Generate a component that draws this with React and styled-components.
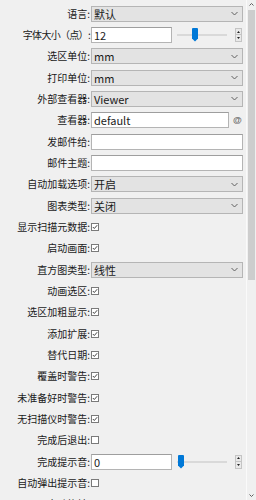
import React from 'react';
import styled, { createGlobalStyle } from 'styled-components';

const GlobalStyle = createGlobalStyle`
  html, body {
    margin: 0;
    padding: 0;
    background: #f0f0f0;
  }
  body {
    font-family: 'Noto Sans CJK SC', 'Noto Sans', sans-serif;
    font-size: 10px;
    color: #1a1a1a;
  }
`;

const Window = styled.div`
  width: 256px;
  height: 500px;
  display: flex;
  overflow: hidden;
  background: #f0f0f0;
`;

const Form = styled.div`
  flex: 1;
  display: grid;
  grid-template-columns: 91px 1fr;
  grid-auto-rows: 21.33px;
  padding: 3px 3px 0 0;
  align-items: center;
`;

const Label = styled.div`
  text-align: right;
  white-space: nowrap;
  line-height: 14px;
  font-size: 10px;
  letter-spacing: ${(p) => (p.$tight ? '-0.7px' : '0')};
  padding-right: 1px;
`;

const Field = styled.div`
  display: flex;
  align-items: center;
  height: 16px;
`;

const Select = styled.div`
  flex: 1;
  height: 16px;
  box-sizing: border-box;
  background: #e3e3e3;
  border: 1px solid #b5b5b5;
  display: flex;
  align-items: center;
  padding-left: 2px;
  font-size: 11px;
  svg {
    margin-left: auto;
    margin-right: 4px;
  }
`;

const Input = styled.div`
  width: ${(p) => p.$width || 'auto'};
  flex: ${(p) => (p.$width ? 'none' : 1)};
  height: 16px;
  box-sizing: border-box;
  background: #fff;
  border: 1px solid #b4b4b4;
  border-top-color: #9e9e9e;
  display: flex;
  align-items: center;
  padding-left: 2px;
  font-size: 11px;
`;

const Slider = styled.div`
  position: relative;
  width: 50px;
  height: 14px;
  margin-left: 5px;
  &::before {
    content: '';
    position: absolute;
    left: 0;
    right: 0;
    top: 6px;
    height: 2px;
    background: #d9d9d9;
  }
`;

const Thumb = styled.svg`
  position: absolute;
  top: 0;
`;

const Spin = styled.div`
  margin-left: auto;
  margin-right: 1px;
  width: 7px;
  height: 14px;
  display: flex;
  flex-direction: column;
  border: 1px solid #c4c4c4;
  box-sizing: border-box;
  background: #e9e9e9;
`;

const SpinHalf = styled.div`
  flex: 1;
  display: flex;
  align-items: center;
  justify-content: center;
  &:first-child {
    border-bottom: 1px solid #c4c4c4;
  }
`;

const AtButton = styled.div`
  width: 9px;
  height: 14px;
  margin-left: 4px;
  margin-right: 1px;
  display: flex;
  align-items: center;
  justify-content: center;
  font-family: 'Liberation Sans', sans-serif;
  font-size: 9px;
  font-weight: bold;
  color: #6a6a6a;
`;

const Scrollbar = styled.div`
  width: 9px;
  display: flex;
  flex-direction: column;
  align-items: center;
  background: #f0f0f0;
  border-left: 1px solid #fafafa;
`;

const Arrow = styled.div`
  height: 9px;
  display: flex;
  align-items: center;
  justify-content: center;
`;

const ScrollThumb = styled.div`
  width: 7px;
  height: 270px;
  margin-top: 1px;
  background: #cdcdcd;
`;

const ScrollSpace = styled.div`
  flex: 1;
`;

const Chevron = () => (
  <svg width="7" height="5" viewBox="0 0 7 5">
    <path d="M0.5 1 L3.5 4 L6.5 1" fill="none" stroke="#606060" strokeWidth="1" />
  </svg>
);

const Check = ({ on }) => (
  <svg width="8" height="8" viewBox="0 0 8 8">
    <rect x="0.5" y="0.5" width="7" height="7" fill="#fff" stroke="#7a7a7a" />
    {on && <path d="M1.8 4 L3.3 5.5 L6.2 2.2" fill="none" stroke="#444" strokeWidth="1" />}
  </svg>
);

const Tri = ({ up }) => (
  <svg width="3" height="2" viewBox="0 0 3 2">
    <path d={up ? 'M0 2 L1.5 0 L3 2Z' : 'M0 0 L1.5 2 L3 0Z'} fill="#222" />
  </svg>
);

const NumberField = ({ value, pos }) => (
  <Field>
    <Input $width="81px">{value}</Input>
    <Slider>
      <Thumb width="6" height="14" viewBox="0 0 6 14" style={{ left: pos }}>
        <path d="M0 1 Q0 0 1 0 L5 0 Q6 0 6 1 L6 10.5 L3 13.5 L0 10.5Z" fill="#0078d7" />
      </Thumb>
    </Slider>
    <Spin>
      <SpinHalf><Tri up /></SpinHalf>
      <SpinHalf><Tri /></SpinHalf>
    </Spin>
  </Field>
);

const rows = [
  { label: '语言:', type: 'select', value: '默认' },
  { label: '字体大小（点）:', type: 'number', value: '12', pos: 15, tight: true },
  { label: '选区单位:', type: 'select', value: 'mm' },
  { label: '打印单位:', type: 'select', value: 'mm' },
  { label: '外部查看器:', type: 'select', value: 'Viewer' },
  { label: '查看器:', type: 'viewer', value: 'default' },
  { label: '发邮件给:', type: 'input', value: '' },
  { label: '邮件主题:', type: 'input', value: '' },
  { label: '自动加载选项:', type: 'select', value: '开启' },
  { label: '图表类型:', type: 'select', value: '关闭' },
  { label: '显示扫描元数据:', type: 'check', on: true },
  { label: '启动画面:', type: 'check', on: true },
  { label: '直方图类型:', type: 'select', value: '线性' },
  { label: '动画选区:', type: 'check', on: true },
  { label: '选区加粗显示:', type: 'check', on: true },
  { label: '添加扩展:', type: 'check', on: true },
  { label: '替代日期:', type: 'check', on: true },
  { label: '覆盖时警告:', type: 'check', on: true },
  { label: '未准备好时警告:', type: 'check', on: true },
  { label: '无扫描仪时警告:', type: 'check', on: true },
  { label: '完成后退出:', type: 'check', on: false },
  { label: '完成提示音:', type: 'number', value: '0', pos: 1 },
  { label: '自动弹出提示音:', type: 'check', on: false },
  { label: '自动旋转:', type: 'check', on: false },
];

const renderField = (row) => {
  switch (row.type) {
    case 'select':
      return (
        <Field>
          <Select>
            {row.value}
            <Chevron />
          </Select>
        </Field>
      );
    case 'number':
      return <NumberField value={row.value} pos={row.pos} />;
    case 'viewer':
      return (
        <Field>
          <Input>{row.value}</Input>
          <AtButton>@</AtButton>
        </Field>
      );
    case 'input':
      return (
        <Field>
          <Input />
        </Field>
      );
    default:
      return (
        <Field>
          <Check on={row.on} />
        </Field>
      );
  }
};

const App = () => {
  return (
    <>
      <GlobalStyle />
      <Window>
        <Form>
          {rows.map((row) => (
            <React.Fragment key={row.label}>
              <Label $tight={row.tight}>{row.label}</Label>
              {renderField(row)}
            </React.Fragment>
          ))}
        </Form>
        <Scrollbar>
          <Arrow>
            <svg width="5" height="3" viewBox="0 0 5 3">
              <path d="M0.5 2.5 L2.5 0.5 L4.5 2.5" fill="none" stroke="#606060" />
            </svg>
          </Arrow>
          <ScrollThumb />
          <ScrollSpace />
          <Arrow>
            <svg width="5" height="3" viewBox="0 0 5 3">
              <path d="M0.5 0.5 L2.5 2.5 L4.5 0.5" fill="none" stroke="#606060" />
            </svg>
          </Arrow>
        </Scrollbar>
      </Window>
    </>
  );
};

export default App;
